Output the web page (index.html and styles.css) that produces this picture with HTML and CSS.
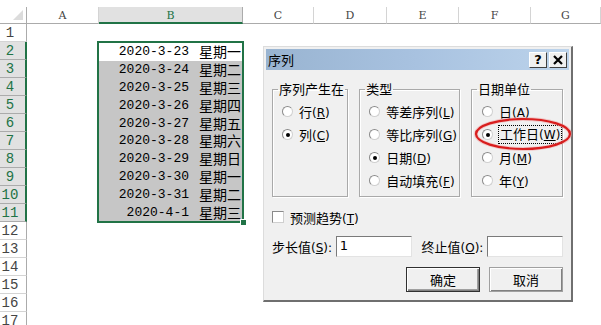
FILE: index.html
```html
<!DOCTYPE html>
<html lang="zh-CN">
<head>
  <meta charset="UTF-8" />
  <meta name="viewport" content="width=device-width, initial-scale=1.0" />
  <title>序列</title>
  <link rel="stylesheet" href="styles.css">
</head>
<body>
  <div class="sheet">
    <div class="corner"></div>
    <div class="col-head">A</div>
    <div class="col-head active">B</div>
    <div class="col-head">C</div>
    <div class="col-head">D</div>
    <div class="col-head">E</div>
    <div class="col-head">F</div>
    <div class="col-head">G</div>

    <div class="row-head">1</div>
    <div class="row-head active">2</div>
    <div class="row-head active">3</div>
    <div class="row-head active">4</div>
    <div class="row-head active">5</div>
    <div class="row-head active">6</div>
    <div class="row-head active">7</div>
    <div class="row-head active">8</div>
    <div class="row-head active">9</div>
    <div class="row-head active">10</div>
    <div class="row-head active">11</div>
    <div class="row-head">12</div>
    <div class="row-head">13</div>
    <div class="row-head">14</div>
    <div class="row-head">15</div>
    <div class="row-head">16</div>
    <div class="row-head">17</div>

    <div class="selection">
      <div class="cell current"><span class="date">2020-3-23</span><span class="week">星期一</span></div>
      <div class="cell"><span class="date">2020-3-24</span><span class="week">星期二</span></div>
      <div class="cell"><span class="date">2020-3-25</span><span class="week">星期三</span></div>
      <div class="cell"><span class="date">2020-3-26</span><span class="week">星期四</span></div>
      <div class="cell"><span class="date">2020-3-27</span><span class="week">星期五</span></div>
      <div class="cell"><span class="date">2020-3-28</span><span class="week">星期六</span></div>
      <div class="cell"><span class="date">2020-3-29</span><span class="week">星期日</span></div>
      <div class="cell"><span class="date">2020-3-30</span><span class="week">星期一</span></div>
      <div class="cell"><span class="date">2020-3-31</span><span class="week">星期二</span></div>
      <div class="cell"><span class="date">2020-4-1</span><span class="week">星期三</span></div>
      <span class="fill-handle"></span>
    </div>
  </div>

  <div class="dialog">
    <div class="titlebar">
      <span class="title">序列</span>
      <div class="tb-btns">
        <span class="tb-btn">?</span>
        <span class="tb-btn">
          <svg width="10" height="10" viewBox="0 0 10 10"><path d="M1 1L9 9M9 1L1 9" stroke="#000" stroke-width="2.2"/></svg>
        </span>
      </div>
    </div>

    <div class="dlg-body">
      <div class="groups">
        <fieldset class="grp g1">
          <legend>序列产生在</legend>
          <div class="radios">
            <div class="radio"><span class="dot"></span><span>行<span class="acc">(<u>R</u>)</span></span></div>
            <div class="radio on"><span class="dot"></span><span>列<span class="acc">(<u>C</u>)</span></span></div>
          </div>
        </fieldset>
        <fieldset class="grp g2">
          <legend>类型</legend>
          <div class="radios">
            <div class="radio"><span class="dot"></span><span>等差序列<span class="acc">(<u>L</u>)</span></span></div>
            <div class="radio"><span class="dot"></span><span>等比序列<span class="acc">(<u>G</u>)</span></span></div>
            <div class="radio on"><span class="dot"></span><span>日期<span class="acc">(<u>D</u>)</span></span></div>
            <div class="radio"><span class="dot"></span><span>自动填充<span class="acc">(<u>F</u>)</span></span></div>
          </div>
        </fieldset>
        <fieldset class="grp g3">
          <legend>日期单位</legend>
          <div class="radios">
            <div class="radio"><span class="dot"></span><span>日<span class="acc">(<u>A</u>)</span></span></div>
            <div class="radio on"><span class="dot"></span><span class="focus">工作日<span class="acc">(<u>W</u>)</span></span></div>
            <div class="radio"><span class="dot"></span><span>月<span class="acc">(<u>M</u>)</span></span></div>
            <div class="radio"><span class="dot"></span><span>年<span class="acc">(<u>Y</u>)</span></span></div>
          </div>
        </fieldset>
      </div>

      <div class="check-row"><span class="checkbox"></span><span>预测趋势<span class="acc">(<u>T</u>)</span></span></div>

      <div class="step-row">
        <span class="lbl lbl-step">步长值<span class="acc">(<u>S</u>):</span></span>
        <span class="field">1</span>
        <span class="lbl lbl-stop">终止值<span class="acc">(<u>O</u>):</span></span>
        <span class="field"></span>
      </div>

      <div class="btn-row">
        <span class="btn default">确定</span>
        <span class="btn">取消</span>
      </div>
    </div>

    <svg class="mark" width="110" height="44" viewBox="0 0 110 44">
      <ellipse cx="55" cy="22" rx="47" ry="15" fill="none" stroke="#f3a0a0" stroke-width="4" opacity="0.5"/>
      <ellipse cx="55" cy="22" rx="47" ry="15" fill="none" stroke="#d81e1e" stroke-width="2.2"/>
    </svg>
  </div>
</body>
</html>
```

FILE: styles.css
```css
html, body {
  margin: 0;
  padding: 0;
  width: 601px;
  height: 325px;
  overflow: hidden;
  background: #fff;
}

/* ---------- 工作表 ---------- */
.sheet {
  margin-top: 7px;
  display: grid;
  grid-template-columns: 27px 72px 144px 71px 73px 72px 72px 1fr;
  grid-template-rows: 17px repeat(17, 18px);
}

.corner {
  position: relative;
  border-right: 1px solid #ababab;
  border-bottom: 1px solid #ababab;
}

.corner::after {
  content: "";
  position: absolute;
  right: 3px;
  bottom: 3px;
  border-left: 10px solid transparent;
  border-bottom: 10px solid #dcdcdc;
}

.col-head {
  box-sizing: border-box;
  border-right: 1px solid #d4d4d4;
  border-bottom: 1px solid #ababab;
  text-align: center;
  font-family: "DejaVu Serif", serif;
  font-size: 11px;
  line-height: 17px;
  color: #444;
}

.col-head.active {
  background: #e1e1e1;
  color: #217346;
  border-bottom: 2px solid #217346;
  border-right-color: #ababab;
}

.row-head {
  grid-column: 1;
  box-sizing: border-box;
  border-right: 1px solid #ababab;
  border-bottom: 1px solid #d4d4d4;
  padding-right: 6px;
  text-align: center;
  font-family: "Liberation Mono", monospace;
  font-size: 14px;
  line-height: 18px;
  color: #444;
}

.row-head.active {
  background: #e1e1e1;
  color: #217346;
  border-right: 2px solid #217346;
  border-bottom-color: #ababab;
  padding-right: 5px;
}

.selection {
  grid-column: 3 / 4;
  grid-row: 3 / 13;
  margin: -1px -1px -1px -2px;
  position: relative;
  display: flex;
  flex-direction: column;
  border: 2px solid #217346;
  background: #c6c6c6;
}

.cell {
  flex: 1;
  display: flex;
  justify-content: flex-end;
  align-items: center;
  gap: 10px;
  padding-right: 1px;
  color: #000;
}

.cell.current {
  background: #fff;
}

.date {
  font-family: "Liberation Mono", monospace;
  font-size: 13px;
  line-height: 17px;
}

.week {
  font-family: "Noto Sans CJK SC", sans-serif;
  font-size: 14px;
  line-height: 17px;
}

.fill-handle {
  position: absolute;
  right: -5px;
  bottom: -5px;
  width: 5px;
  height: 5px;
  background: #217346;
  border: 1px solid #fff;
}

/* ---------- 序列对话框 ---------- */
.dialog {
  position: absolute;
  left: 263px;
  top: 46px;
  width: 310px;
  height: 256px;
  box-sizing: border-box;
  padding: 2px;
  background: #f0f0f0;
  border: 1px solid #dcdcdc;
  border-right: 2px solid #6f6f6f;
  border-bottom: 2px solid #6f6f6f;
  font-family: "Noto Sans CJK SC", sans-serif;
  font-size: 12px;
  color: #000;
}

.acc {
  font-family: "DejaVu Sans", sans-serif;
  font-size: 12px;
}

.titlebar {
  height: 21px;
  display: flex;
  justify-content: space-between;
  align-items: center;
  padding: 0 2px;
  background: linear-gradient(to right, #99b4d1, #a8c2e0 50%, #bcd3eb);
}

.title {
  font-size: 13px;
  line-height: 21px;
}

.tb-btns {
  display: flex;
  gap: 2px;
}

.tb-btn {
  width: 18px;
  height: 16px;
  box-sizing: border-box;
  display: flex;
  align-items: center;
  justify-content: center;
  background: #f0f0f0;
  border: 1px solid;
  border-color: #fff #404040 #404040 #fff;
  font-family: "DejaVu Sans", sans-serif;
  font-weight: bold;
  font-size: 13px;
  line-height: 14px;
}

.dlg-body {
  padding: 11px 6px 0 6px;
}

.groups {
  display: flex;
  gap: 11px;
}

.grp {
  margin: 0;
  padding: 0;
  min-width: 0;
  border: 1px solid #a9a9a9;
  box-shadow: inset 1px 1px #fff, 1px 1px #fff;
}

.g1 { width: 76px; }
.g2 { width: 101px; }
.g3 { width: 92px; }

.grp legend {
  margin-left: 5px;
  padding: 0 1px;
  font-size: 13px;
  line-height: 16px;
  white-space: nowrap;
}

.radios {
  height: 99px;
  box-sizing: border-box;
  padding: 3px 0 0 9px;
}

.radio {
  height: 23px;
  display: flex;
  align-items: center;
  gap: 6px;
  white-space: nowrap;
  font-size: 13px;
}

.g3 .radio {
  padding-left: 1px;
}

.dot {
  flex: none;
  width: 11px;
  height: 11px;
  box-sizing: border-box;
  border-radius: 50%;
  border: 1px solid #8a8a8a;
  border-right-color: #d0d0d0;
  border-bottom-color: #d0d0d0;
  background: #fff;
  position: relative;
}

.radio.on .dot::after {
  content: "";
  position: absolute;
  left: 2.5px;
  top: 2.5px;
  width: 4px;
  height: 4px;
  border-radius: 50%;
  background: #000;
}

.focus {
  outline: 1px dotted #000;
  padding: 0 1px;
  line-height: 15px;
}

.check-row {
  margin-top: 12px;
  height: 16px;
  display: flex;
  align-items: center;
  gap: 6px;
  font-size: 13px;
}

.checkbox {
  width: 12px;
  height: 12px;
  box-sizing: border-box;
  background: #fff;
  border: 1px solid #8a8a8a;
  border-right-color: #cfcfcf;
  border-bottom-color: #cfcfcf;
}

.step-row {
  margin-top: 11px;
  display: flex;
  align-items: center;
  font-size: 13px;
}

.lbl-step { width: 64px; }
.lbl-stop { width: 66px; margin-left: 10px; }

.field {
  width: 76px;
  height: 21px;
  box-sizing: border-box;
  padding-left: 3px;
  background: #fff;
  border: 1px solid;
  border-color: #7a7a7a #e3e3e3 #e3e3e3 #7a7a7a;
  font-family: "DejaVu Sans", sans-serif;
  line-height: 18px;
}

.btn-row {
  margin-top: 10px;
  display: flex;
  justify-content: flex-end;
  gap: 9px;
  font-size: 13px;
}

.btn {
  width: 74px;
  height: 25px;
  box-sizing: border-box;
  display: flex;
  align-items: center;
  justify-content: center;
  background: #f0f0f0;
  border: 1px solid #a0a0a0;
  box-shadow: inset 1px 1px #fff, inset -1px -1px #808080;
}

.btn.default {
  border-color: #303030;
  box-shadow: inset 1px 1px #fff, inset -1px -1px #808080, inset -2px -2px #a0a0a0;
}

.mark {
  position: absolute;
  left: 204px;
  top: 65px;
}
```
